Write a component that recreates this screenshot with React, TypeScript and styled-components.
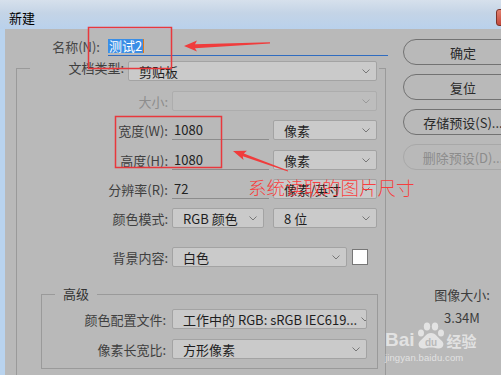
import styled, { createGlobalStyle } from 'styled-components'

const GlobalStyle = createGlobalStyle`
  html, body {
    margin: 0;
    padding: 0;
    background: #b9b9b9;
  }
`

const Window = styled.div`
  position: relative;
  width: 501px;
  height: 375px;
  overflow: hidden;
  background: #b9b9b9;
  font-family: "Noto Sans CJK SC", "Noto Sans", sans-serif;
  font-size: 13px;
  line-height: 1;
  color: #3d3d3d;
`

const TitleBar = styled.div`
  height: 29px;
  display: flex;
  align-items: center;
  justify-content: space-between;
  background: linear-gradient(#d6e0ec 0%, #c4d4e6 45%, #b9d1ec 100%);
`

const Title = styled.span`
  margin: 5px 0 0 9px;
  font-size: 13px;
  color: #000;
`

const CloseButton = styled.div`
  width: 40px;
  height: 15px;
  flex: none;
  margin: 5px -37px 0 0;
  border: 1px solid #7d3228;
  border-radius: 3px;
  background: linear-gradient(#e2806f, #c2483c);
`

const Frame = styled.div`
  display: flex;
  height: 346px;
`

const SideStrip = styled.div`
  width: 5px;
  flex: none;
  background: #b9d3ee;
`

const Body = styled.div`
  flex: none;
  display: flex;
  background: #b9b9b9;
`

const LeftCol = styled.div`
  width: 398px;
  flex: none;
  display: flex;
  flex-direction: column;
`

const NameRow = styled.div`
  display: flex;
  align-items: center;
  height: 19px;
  margin-top: 8px;
`

const NameLabel = styled.span`
  width: 95px;
  margin-right: 8px;
  text-align: right;
  color: #474747;
`

const NameInput = styled.div`
  width: 280px;
  height: 19px;
  box-sizing: border-box;
  display: flex;
  align-items: center;
  border-bottom: 1px solid #2f6cc0;
`

const Selected = styled.span`
  padding: 0 1px;
  line-height: 14px;
  background: #3a8ee6;
  color: #fff;
`

const Caret = styled.span`
  width: 1px;
  height: 14px;
  background: #e07a1c;
`

const Group = styled.fieldset`
  width: 370px;
  box-sizing: border-box;
  margin: 5px 0 0 11px;
  padding: 0 0 6px;
  min-inline-size: 0;
  border: 1px solid #9a9a9a;
`

const HeadLegend = styled.legend`
  width: 349px;
  height: 14px;
  margin-left: 13px;
  padding: 0;
  display: flex;
  align-items: flex-start;
`

const SubGroup = styled.fieldset`
  width: 337px;
  box-sizing: border-box;
  margin: 18px 0 0 24px;
  padding: 0 0 9px;
  min-inline-size: 0;
  border: 1px solid #9a9a9a;
`

const SubLegend = styled.legend`
  margin-left: 13px;
  padding: 0 8px;
  line-height: 18px;
  color: #333;
`

const Row = styled.div<{ $top: number }>`
  display: flex;
  align-items: center;
  height: 20px;
  margin-top: ${(p) => p.$top}px;
`

const Label = styled.span<{ $w: number; $gap?: number; $disabled?: boolean }>`
  width: ${(p) => p.$w}px;
  margin-right: ${(p) => p.$gap ?? 4}px;
  text-align: right;
  white-space: nowrap;
  color: ${(p) => (p.$disabled ? '#8d8d8d' : '#3f3f3f')};
`

const DropBox = styled.div<{ $w: number; $gap?: number; $disabled?: boolean }>`
  width: ${(p) => p.$w}px;
  height: 20px;
  flex: none;
  box-sizing: border-box;
  margin-left: ${(p) => p.$gap ?? 0}px;
  padding: 0 6px 0 10px;
  display: flex;
  align-items: center;
  justify-content: space-between;
  border: 1px solid ${(p) => (p.$disabled ? '#adadad' : '#a3a3a3')};
  border-radius: 2px;
  background: ${(p) => (p.$disabled ? '#bdbdbd' : '#cacaca')};
  color: #1e1e1e;
  white-space: nowrap;
  overflow: hidden;
`

const Chevron = styled.svg`
  flex: none;
  margin-left: 4px;
`

const ValueField = styled.div`
  width: 97px;
  height: 20px;
  flex: none;
  box-sizing: border-box;
  padding-left: 2px;
  display: flex;
  align-items: center;
  border-bottom: 1px solid #8c8c8c;
  color: #222;
`

const Swatch = styled.div`
  width: 16px;
  height: 16px;
  flex: none;
  box-sizing: border-box;
  margin-left: 5px;
  border: 1px solid #777;
  background: #fff;
`

const RightCol = styled.div`
  width: 118px;
  flex: none;
  padding-top: 10px;
  display: flex;
  flex-direction: column;
  align-items: center;
`

const Button = styled.div<{ $disabled?: boolean }>`
  width: 120px;
  height: 26px;
  flex: none;
  box-sizing: border-box;
  margin: 0 0 9px 2px;
  display: flex;
  align-items: center;
  justify-content: center;
  border: 1px solid ${(p) => (p.$disabled ? '#a8a8a8' : '#727272')};
  border-radius: 13px;
  color: ${(p) => (p.$disabled ? '#8c8c8c' : '#2a2a2a')};
  white-space: nowrap;
`

const SizeTitle = styled.div`
  margin-top: 107px;
  line-height: 18px;
  color: #3d3d3d;
`

const SizeValue = styled.div`
  margin-top: 5px;
  line-height: 18px;
  color: #3d3d3d;
`

const Marks = styled.svg`
  position: absolute;
  inset: 0;
  pointer-events: none;
`

const Note = styled.span`
  position: absolute;
  left: 248px;
  top: 178px;
  font-size: 18.5px;
  font-weight: 300;
  line-height: 1;
  color: rgba(255, 45, 45, 0.9);
  white-space: nowrap;
`

const Watermark = styled.div`
  position: absolute;
  left: 385px;
  top: 322px;
  display: flex;
  flex-direction: column;
  color: rgba(255, 255, 255, 0.6);
  pointer-events: none;
`

const MarkTop = styled.div`
  display: flex;
  align-items: flex-end;
`

const Bai = styled.span`
  font-family: "Liberation Sans", Arial, sans-serif;
  font-size: 19px;
  font-weight: bold;
  line-height: 1;
  margin-bottom: 1px;
`

const Jingyan = styled.span`
  font-size: 15px;
  font-weight: bold;
  margin-bottom: 2px;
`

const MarkUrl = styled.span`
  margin-top: 3px;
  font-family: "Liberation Sans", Arial, sans-serif;
  font-size: 9.5px;
  letter-spacing: 0.1px;
`

function Select({
  w,
  gap,
  disabled,
  children,
}: {
  w: number
  gap?: number
  disabled?: boolean
  children?: React.ReactNode
}) {
  return (
    <DropBox $w={w} $gap={gap} $disabled={disabled}>
      <span>{children}</span>
      <Chevron width="8" height="5" viewBox="0 0 8 5">
        <polyline
          points="0.5,0.5 4,4 7.5,0.5"
          fill="none"
          stroke={disabled ? '#999' : '#777'}
          strokeWidth="1"
        />
      </Chevron>
    </DropBox>
  )
}

export default function App() {
  return (
    <Window>
      <GlobalStyle />
      <TitleBar>
        <Title>新建</Title>
        <CloseButton />
      </TitleBar>

      <Frame>
        <SideStrip />
        <Body>
          <LeftCol>
            <NameRow>
              <NameLabel>名称(N):</NameLabel>
              <NameInput>
                <Selected>测试2</Selected>
                <Caret />
              </NameInput>
            </NameRow>

            <Group>
              <HeadLegend>
                <Label $w={94}>文档类型:</Label>
                <Select w={249}>剪贴板</Select>
              </HeadLegend>

              <Row $top={16}>
                <Label $w={151} $disabled>
                  大小:
                </Label>
                <Select w={205} disabled />
              </Row>

              <Row $top={9}>
                <Label $w={151}>宽度(W):</Label>
                <ValueField>1080</ValueField>
                <Select w={104} gap={4}>像素</Select>
              </Row>

              <Row $top={10}>
                <Label $w={151}>高度(H):</Label>
                <ValueField>1080</ValueField>
                <Select w={104} gap={4}>像素</Select>
              </Row>

              <Row $top={9}>
                <Label $w={151}>分辨率(R):</Label>
                <ValueField>72</ValueField>
                <Select w={104} gap={4}>像素/英寸</Select>
              </Row>

              <Row $top={9}>
                <Label $w={151}>颜色模式:</Label>
                <Select w={92}>RGB 颜色</Select>
                <Select w={104} gap={9}>8 位</Select>
              </Row>

              <Row $top={19}>
                <Label $w={151}>背景内容:</Label>
                <Select w={175}>白色</Select>
                <Swatch />
              </Row>

              <SubGroup>
                <SubLegend>高级</SubLegend>
                <Row $top={6}>
                  <Label $w={124} $gap={6}>
                    颜色配置文件:
                  </Label>
                  <Select w={195}>工作中的 RGB: sRGB IEC619...</Select>
                </Row>
                <Row $top={10}>
                  <Label $w={124} $gap={6}>
                    像素长宽比:
                  </Label>
                  <Select w={195}>方形像素</Select>
                </Row>
              </SubGroup>
            </Group>
          </LeftCol>

          <RightCol>
            <Button>确定</Button>
            <Button>复位</Button>
            <Button>存储预设(S)...</Button>
            <Button $disabled>删除预设(D)...</Button>
            <SizeTitle>图像大小:</SizeTitle>
            <SizeValue>3.34M</SizeValue>
          </RightCol>
        </Body>
      </Frame>

      <Marks width="501" height="375" viewBox="0 0 501 375">
        <rect x="88.5" y="27.5" width="83" height="41" fill="none" stroke="#e8383d" strokeWidth="1.5" />
        <rect x="115.5" y="116.5" width="106" height="51" fill="none" stroke="#e8383d" strokeWidth="1.5" />
        <polygon
          points="184,46 197,40.5 195,44.2 270,42.3 270,43.4 195,48.2 197,51.5"
          fill="#f03c3c"
        />
        <polygon
          points="233,151 246.9,150.7 243.8,153.4 288.1,170.6 287.9,171.4 242.8,156.2 243.5,160.1"
          fill="#f03c3c"
        />
      </Marks>

      <Note>系统读取的图片尺寸</Note>

      <Watermark>
        <MarkTop>
          <Bai>Bai</Bai>
          <svg width="32" height="28" viewBox="0 0 32 28">
            <ellipse cx="6" cy="11" rx="3" ry="3.6" fill="currentColor" />
            <ellipse cx="12" cy="4.5" rx="3.2" ry="4" fill="currentColor" />
            <ellipse cx="20" cy="4.5" rx="3.2" ry="4" fill="currentColor" />
            <ellipse cx="26" cy="11" rx="3" ry="3.6" fill="currentColor" />
            <path
              d="M16 11 C11 11 9 16 5 19 C2 22 4 27 9 26.5 C12 26 13 25.5 16 25.5 C19 25.5 20 26 23 26.5 C28 27 30 22 27 19 C23 16 21 11 16 11 Z"
              fill="currentColor"
            />
            <text
              x="16"
              y="24"
              textAnchor="middle"
              fontFamily="Liberation Sans, Arial, sans-serif"
              fontWeight="bold"
              fontSize="10"
              fill="#b9b9b9"
            >
              du
            </text>
          </svg>
          <Jingyan>经验</Jingyan>
        </MarkTop>
        <MarkUrl>jingyan.baidu.com</MarkUrl>
      </Watermark>
    </Window>
  )
}
